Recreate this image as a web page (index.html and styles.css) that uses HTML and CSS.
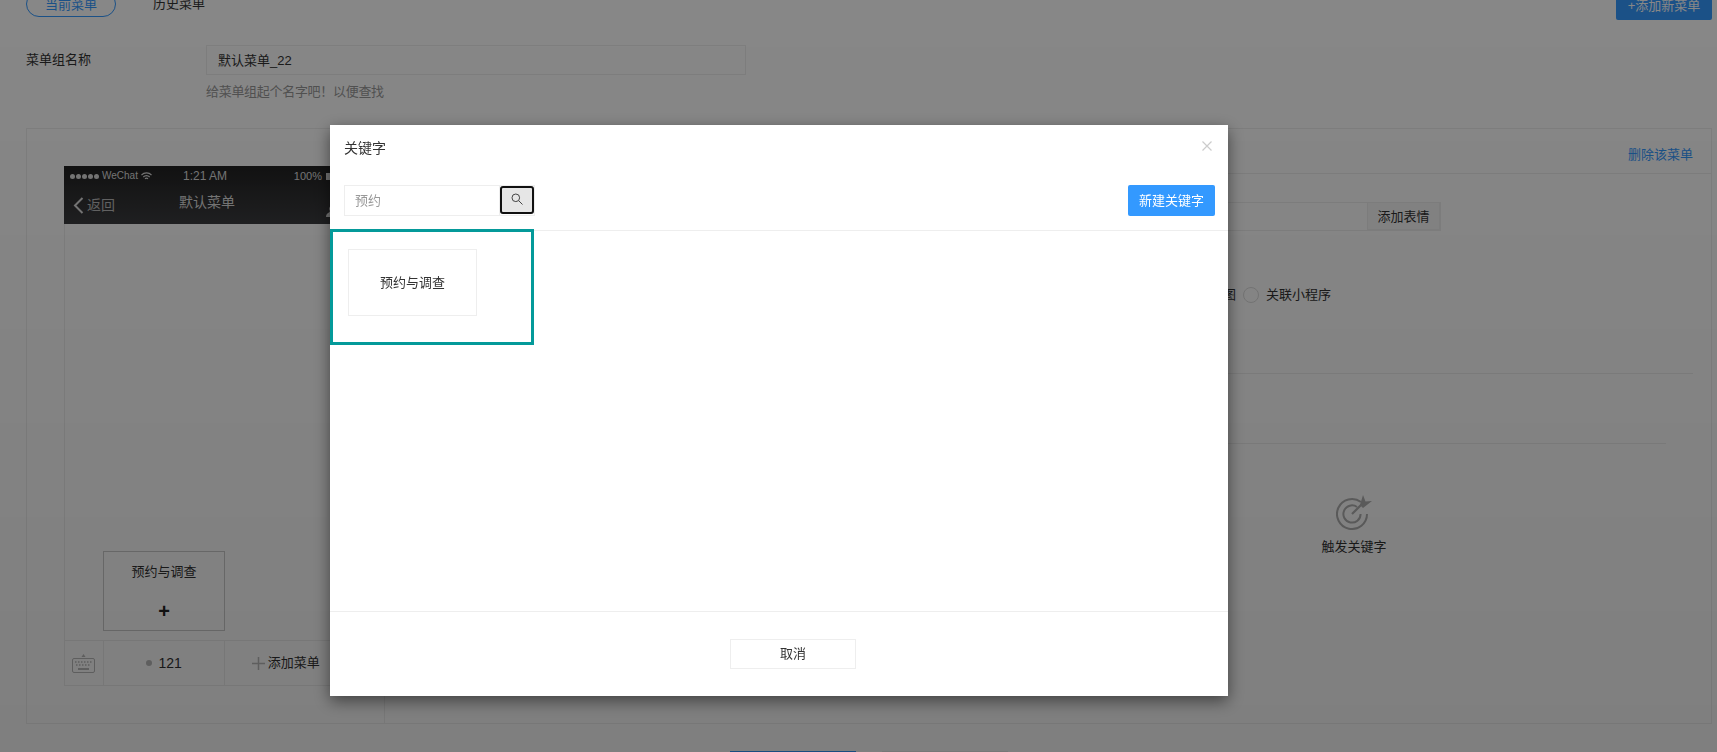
FILE: index.html
```html
<!DOCTYPE html>
<html lang="zh-CN">
<head>
    <meta charset="UTF-8">
    <meta name="viewport" content="width=device-width, initial-scale=1.0">
    <title>自定义菜单</title>
    <link rel="stylesheet" href="styles.css">
</head>
<body>
    <div class="page">
        <!-- 顶部标签 -->
        <div class="tabs">
            <div class="tab-list">
                <a class="tab active">当前菜单</a>
                <a class="tab">历史菜单</a>
            </div>
            <button class="add-group">+添加新菜单</button>
        </div>

        <div class="name-row">
            <label class="name-label">菜单组名称</label>
            <input class="name-input" type="text" value="默认菜单_22">
        </div>
        <p class="name-hint">给菜单组起个名字吧！以便查找</p>

        <div class="panel">
            <div class="panel-left">
                <div class="phone">
                    <div class="phone-top">
                        <div class="status-bar">
                            <span class="status-left">
                                <span class="status-dots"><i></i><i></i><i></i><i></i><i></i></span>
                                WeChat
                                <svg class="wifi" width="11" height="9" viewBox="0 0 11 9"><path d="M.5 3a7 7 0 0 1 10 0M2.300 5a4.500 4.500 0 0 1 6.400 0M4 6.800a2 2 0 0 1 3 0" fill="none" stroke="#ddd" stroke-width="1.100"/></svg>
                            </span>
                            <span class="status-time">1:21 AM</span>
                            <span class="status-right">100%<i class="battery"></i></span>
                        </div>
                        <div class="phone-nav">
                            <span class="nav-back">
                                <svg width="11" height="17" viewBox="0 0 11 17"><path d="M9.500 1 2 8.500 9.500 16" fill="none" stroke="#ddd" stroke-width="2"/></svg>
                                返回
                            </span>
                            <span class="nav-title">默认菜单</span>
                            <span class="nav-user">
                                <svg width="16" height="12" viewBox="0 0 16 12"><path d="M1 12c0-3 2-4 3-4.500 1-.5 1-1.500.5-2.500C4 3.500 4.500 1 6.500 1S9 3.500 8.500 5c-.5 1-.5 2 .5 2.500 1 .5 3 1.500 3 4.500z" fill="#ddd"/></svg>
                            </span>
                        </div>
                    </div>
                    <div class="phone-body">
                        <div class="sub-menu">
                            <span class="sub-name">预约与调查</span>
                            <span class="sub-add">+</span>
                        </div>
                    </div>
                    <div class="phone-bar">
                        <div class="bar-key">
                            <svg width="23" height="19" viewBox="0 0 23 19">
                                <path d="M11.500 0l2 3h-4z" fill="#bbb"/>
                                <rect x=".5" y="4.500" width="22" height="14" rx="1.500" fill="none" stroke="#bbb"/>
                                <path d="M3 8h17M4 11h15" stroke="#bbb" stroke-width="1.500" stroke-dasharray="1.500 1.500"/>
                                <path d="M6 15h11" stroke="#bbb" stroke-width="2"/>
                            </svg>
                        </div>
                        <div class="bar-cell"><i class="bar-dot"></i>121</div>
                        <div class="bar-cell bar-add">
                            <svg width="13" height="13" viewBox="0 0 13 13"><path d="M6.500 0v13M0 6.500h13" stroke="#bbb" stroke-width="1.500"/></svg>
                            添加菜单
                        </div>
                    </div>
                </div>
            </div>

            <div class="panel-right">
                <div class="right-head"><a class="del-link">删除该菜单</a></div>
                <div class="title-row">
                    <input class="title-input" type="text">
                    <button class="emoji-btn">添加表情</button>
                </div>
                <div class="radio-row">
                    <span>关联大图</span>
                    <i class="radio"></i>
                    <span>关联小程序</span>
                </div>
                <div class="line line-first"></div>
                <div class="line line-second"></div>
                <div class="trigger">
                    <svg width="36" height="36" viewBox="0 0 36 36" fill="none" stroke="#b0b0b0" stroke-width="2">
                        <path d="M25 7A15 15 0 1 0 31 19"/>
                        <path d="M21 12a8.600 8.600 0 1 0 3.600 7"/>
                        <path d="M16 19l10-10" stroke-width="2.200"/>
                        <path d="M24 10 27 0l2.500 6.500L36 6l-9 7z" fill="#b0b0b0" stroke="none"/>
                    </svg>
                    <span>触发关键字</span>
                </div>
            </div>
        </div>

        <div class="page-btns">
            <button class="btn-save"></button>
            <button class="btn-other"></button>
        </div>
    </div>

    <!-- 遮罩和关键字弹窗 -->
    <div class="mask"></div>
    <div class="modal">
        <div class="modal-head">
            <span class="modal-title">关键字</span>
            <svg class="modal-close" width="10" height="10" viewBox="0 0 10 10"><path d="M.5.500l9 9M9.500.500l-9 9" stroke="#ccc" stroke-width="1.200"/></svg>
        </div>
        <div class="modal-tools">
            <div class="search">
                <input class="search-input" type="text" value="预约">
                <div class="search-wrap">
                    <button class="search-btn">
                        <svg width="12" height="12" viewBox="0 0 12 12" fill="none" stroke="#444"><circle cx="4.800" cy="4.800" r="3.800"/><path d="M7.700 7.700 11.500 11.500"/></svg>
                    </button>
                </div>
            </div>
            <button class="new-btn">新建关键字</button>
        </div>
        <div class="modal-body">
            <div class="keyword-box">
                <div class="keyword-card">预约与调查</div>
            </div>
        </div>
        <div class="modal-foot">
            <button class="cancel-btn">取消</button>
        </div>
    </div>
</body>
</html>
```

FILE: styles.css
```css
/* 页面 */
html, body {
    height: 752px;
    overflow: hidden;
}
body {
    margin: 0;
    background: #fff;
    color: #333;
    font-family: "Liberation Sans", "Noto Sans CJK SC", sans-serif;
    font-size: 13px;
    line-height: 18px;
}
button, input {
    font-family: inherit;
    font-size: 13px;
    color: #333;
    box-sizing: border-box;
}
.page {
    margin-top: -10px;
    padding: 0 5px 0 26px;
}

/* 顶部标签 */
.tabs {
    display: flex;
    justify-content: space-between;
    height: 30px;
}
.tab-list {
    display: flex;
    gap: 37px;
    padding-top: 1px;
}
.tab {
    width: 50px;
    height: 26px;
    line-height: 25px;
    text-align: center;
    white-space: nowrap;
}
.tab.active {
    box-sizing: border-box;
    width: 90px;
    border: 1px solid #3399ff;
    border-radius: 13px;
    color: #3399ff;
}
.add-group {
    width: 96px;
    height: 30px;
    padding: 0 0 2px;
    border: none;
    border-radius: 2px;
    background: #3399ff;
    color: #fff;
}

/* 菜单组名称 */
.name-row {
    display: flex;
    align-items: center;
    margin-top: 25px;
}
.name-label {
    width: 180px;
}
.name-input {
    width: 540px;
    height: 30px;
    padding: 0 11px 2px;
    border: 1px solid #eee;
    outline: none;
}
.name-hint {
    margin: 8px 0 0 180px;
    color: #999;
    letter-spacing: -0.3px;
}

/* 主面板 */
.panel {
    display: flex;
    height: 596px;
    box-sizing: border-box;
    margin-top: 27px;
    border: 1px solid #eee;
}
.panel-left {
    box-sizing: border-box;
    width: 358px;
    padding: 37px 0 0 37px;
    border-right: 1px solid #eee;
}
.phone {
    display: flex;
    flex-direction: column;
    width: 283px;
    height: 520px;
    box-sizing: border-box;
    border: 1px solid #eee;
    border-top: none;
}
.phone-top {
    margin-left: -1px;
    height: 58px;
    background: linear-gradient(#222, #3c3d40);
    color: #ddd;
}
.status-bar {
    display: grid;
    grid-template-columns: 1fr auto 1fr;
    align-items: center;
    height: 20px;
    padding: 0 6px;
    font-size: 10px;
}
.status-left {
    display: flex;
    align-items: center;
    gap: 3px;
}
.status-dots {
    display: flex;
    gap: 1px;
}
.status-dots i {
    width: 5px;
    height: 5px;
    border-radius: 50%;
    background: #ddd;
}
.status-time {
    font-size: 12px;
}
.status-right {
    display: flex;
    justify-content: flex-end;
    align-items: center;
    gap: 4px;
    font-size: 11px;
}
.battery {
    width: 14px;
    height: 7px;
    background: #ddd;
}
.phone-nav {
    display: grid;
    grid-template-columns: 1fr auto 1fr;
    height: 38px;
    padding: 0 5px 0 9px;
}
.nav-back {
    display: flex;
    align-items: center;
    gap: 3px;
    padding-top: 9px;
    height: 20px;
    color: #bbb;
    font-size: 14px;
}
.nav-title {
    padding-top: 7px;
    font-size: 14px;
}
.nav-user {
    display: flex;
    justify-content: flex-end;
    padding-top: 19px;
}
.phone-body {
    flex: 1;
    display: flex;
    align-items: flex-end;
    padding: 0 0 9px 38px;
}
.sub-menu {
    display: flex;
    flex-direction: column;
    align-items: center;
    width: 122px;
    height: 80px;
    box-sizing: border-box;
    border: 1px solid #ccc;
    padding-top: 11px;
}
.sub-add {
    margin-top: 21px;
    font-size: 20px;
    font-weight: bold;
    color: #222;
}
.phone-bar {
    display: flex;
    height: 46px;
    border-top: 1px solid #eee;
    box-sizing: border-box;
    border-bottom: 1px solid #eee;
    margin-bottom: -1px;
}
.bar-key {
    display: flex;
    align-items: center;
    justify-content: center;
    width: 38px;
    border-right: 1px solid #eee;
}
.bar-cell {
    display: flex;
    align-items: center;
    justify-content: center;
    gap: 6px;
    width: 121px;
    border-right: 1px solid #eee;
    font-size: 14px;
}
.bar-add {
    gap: 3px;
    border-right: none;
    font-size: 13px;
}
.bar-dot {
    width: 6px;
    height: 6px;
    border-radius: 50%;
    background: #bbb;
}

/* 右侧 */
.panel-right {
    flex: 1;
}
.right-head {
    height: 45px;
    box-sizing: border-box;
    padding: 17px 18px 0 0;
    border-bottom: 1px solid #eee;
    text-align: right;
}
.del-link {
    color: #3399ff;
}
.title-row {
    display: flex;
    height: 29px;
    margin: 28px 270px 0 60px;
}
.title-input {
    flex: 1;
    border: 1px solid #eee;
    border-right: none;
}
.emoji-btn {
    width: 74px;
    padding: 0 0 2px;
    border: 1px solid #eee;
    border-width: 1px 2px 2px 1px;
    background: #f8f8f8;
}
.radio-row {
    display: flex;
    align-items: center;
    gap: 7px;
    margin: 55px 0 0 799px;
}
.radio {
    width: 16px;
    height: 16px;
    box-sizing: border-box;
    border: 1px solid #ddd;
    border-radius: 50%;
}
.line {
    height: 1px;
    background: #eee;
}
.line-first {
    margin: 69px 18px 0 20px;
}
.line-second {
    margin: 69px 45px 0 20px;
}
.trigger {
    display: flex;
    flex-direction: column;
    align-items: center;
    gap: 7px;
    width: 100px;
    margin: 51px 0 0 919px;
}
.page-btns {
    display: flex;
    justify-content: center;
    gap: 26px;
    margin-top: 27px;
}
.btn-save, .btn-other {
    width: 126px;
    height: 32px;
    border: none;
}
.btn-save {
    background: #3399ff;
}
.btn-other {
    background: #eee;
}

/* 遮罩 */
.mask {
    position: fixed;
    inset: 0;
    background: linear-gradient(rgba(0, 0, 0, 0.47), rgba(0, 0, 0, 0.5));
}

/* 弹窗 */
.modal {
    position: fixed;
    left: 330px;
    top: 125px;
    display: flex;
    flex-direction: column;
    width: 898px;
    height: 571px;
    background: #fff;
    box-shadow: 0 5px 15px rgba(0, 0, 0, 0.5);
}
.modal-head {
    display: flex;
    justify-content: space-between;
    align-items: flex-start;
    height: 60px;
    box-sizing: border-box;
    padding: 14px 16px 0 14px;
}
.modal-title {
    font-size: 14px;
}
.modal-close {
    margin-top: 2px;
}
.modal-tools {
    display: flex;
    justify-content: space-between;
    height: 46px;
    box-sizing: border-box;
    padding: 0 13px 0 14px;
    border-bottom: 1px solid #eee;
}
.search {
    display: flex;
    height: 31px;
}
.search-input {
    width: 156px;
    height: 31px;
    padding: 0 10px 2px;
    border: 1px solid #eee;
    outline: none;
    color: #999;
}
.search-wrap {
    width: 35px;
    height: 31px;
    box-sizing: border-box;
    border: 1px solid #eee;
    border-left: none;
}
.search-btn {
    display: flex;
    align-items: center;
    justify-content: center;
    width: 34px;
    height: 28px;
    padding: 0 0 3px;
    border: 2px solid #111;
    border-radius: 3px;
    background: #e6e6e6;
}
.new-btn {
    width: 87px;
    height: 31px;
    padding: 0 0 2px;
    border: none;
    border-radius: 2px;
    background: #3399ff;
    color: #fff;
}
.modal-body {
    flex: 1;
    margin-top: -2px;
}
.keyword-box {
    width: 204px;
    height: 116px;
    box-sizing: border-box;
    border: 3px solid #049a9a;
    padding: 17px 0 0 15px;
}
.keyword-card {
    width: 129px;
    height: 67px;
    box-sizing: border-box;
    border: 1px solid #eee;
    line-height: 65px;
    text-align: center;
}
.modal-foot {
    display: flex;
    justify-content: center;
    height: 85px;
    box-sizing: border-box;
    padding: 27px 0 0 28px;
    border-top: 1px solid #eee;
}
.cancel-btn {
    width: 126px;
    height: 30px;
    padding: 0 0 3px;
    border: 1px solid #eee;
    background: #fff;
}
```
